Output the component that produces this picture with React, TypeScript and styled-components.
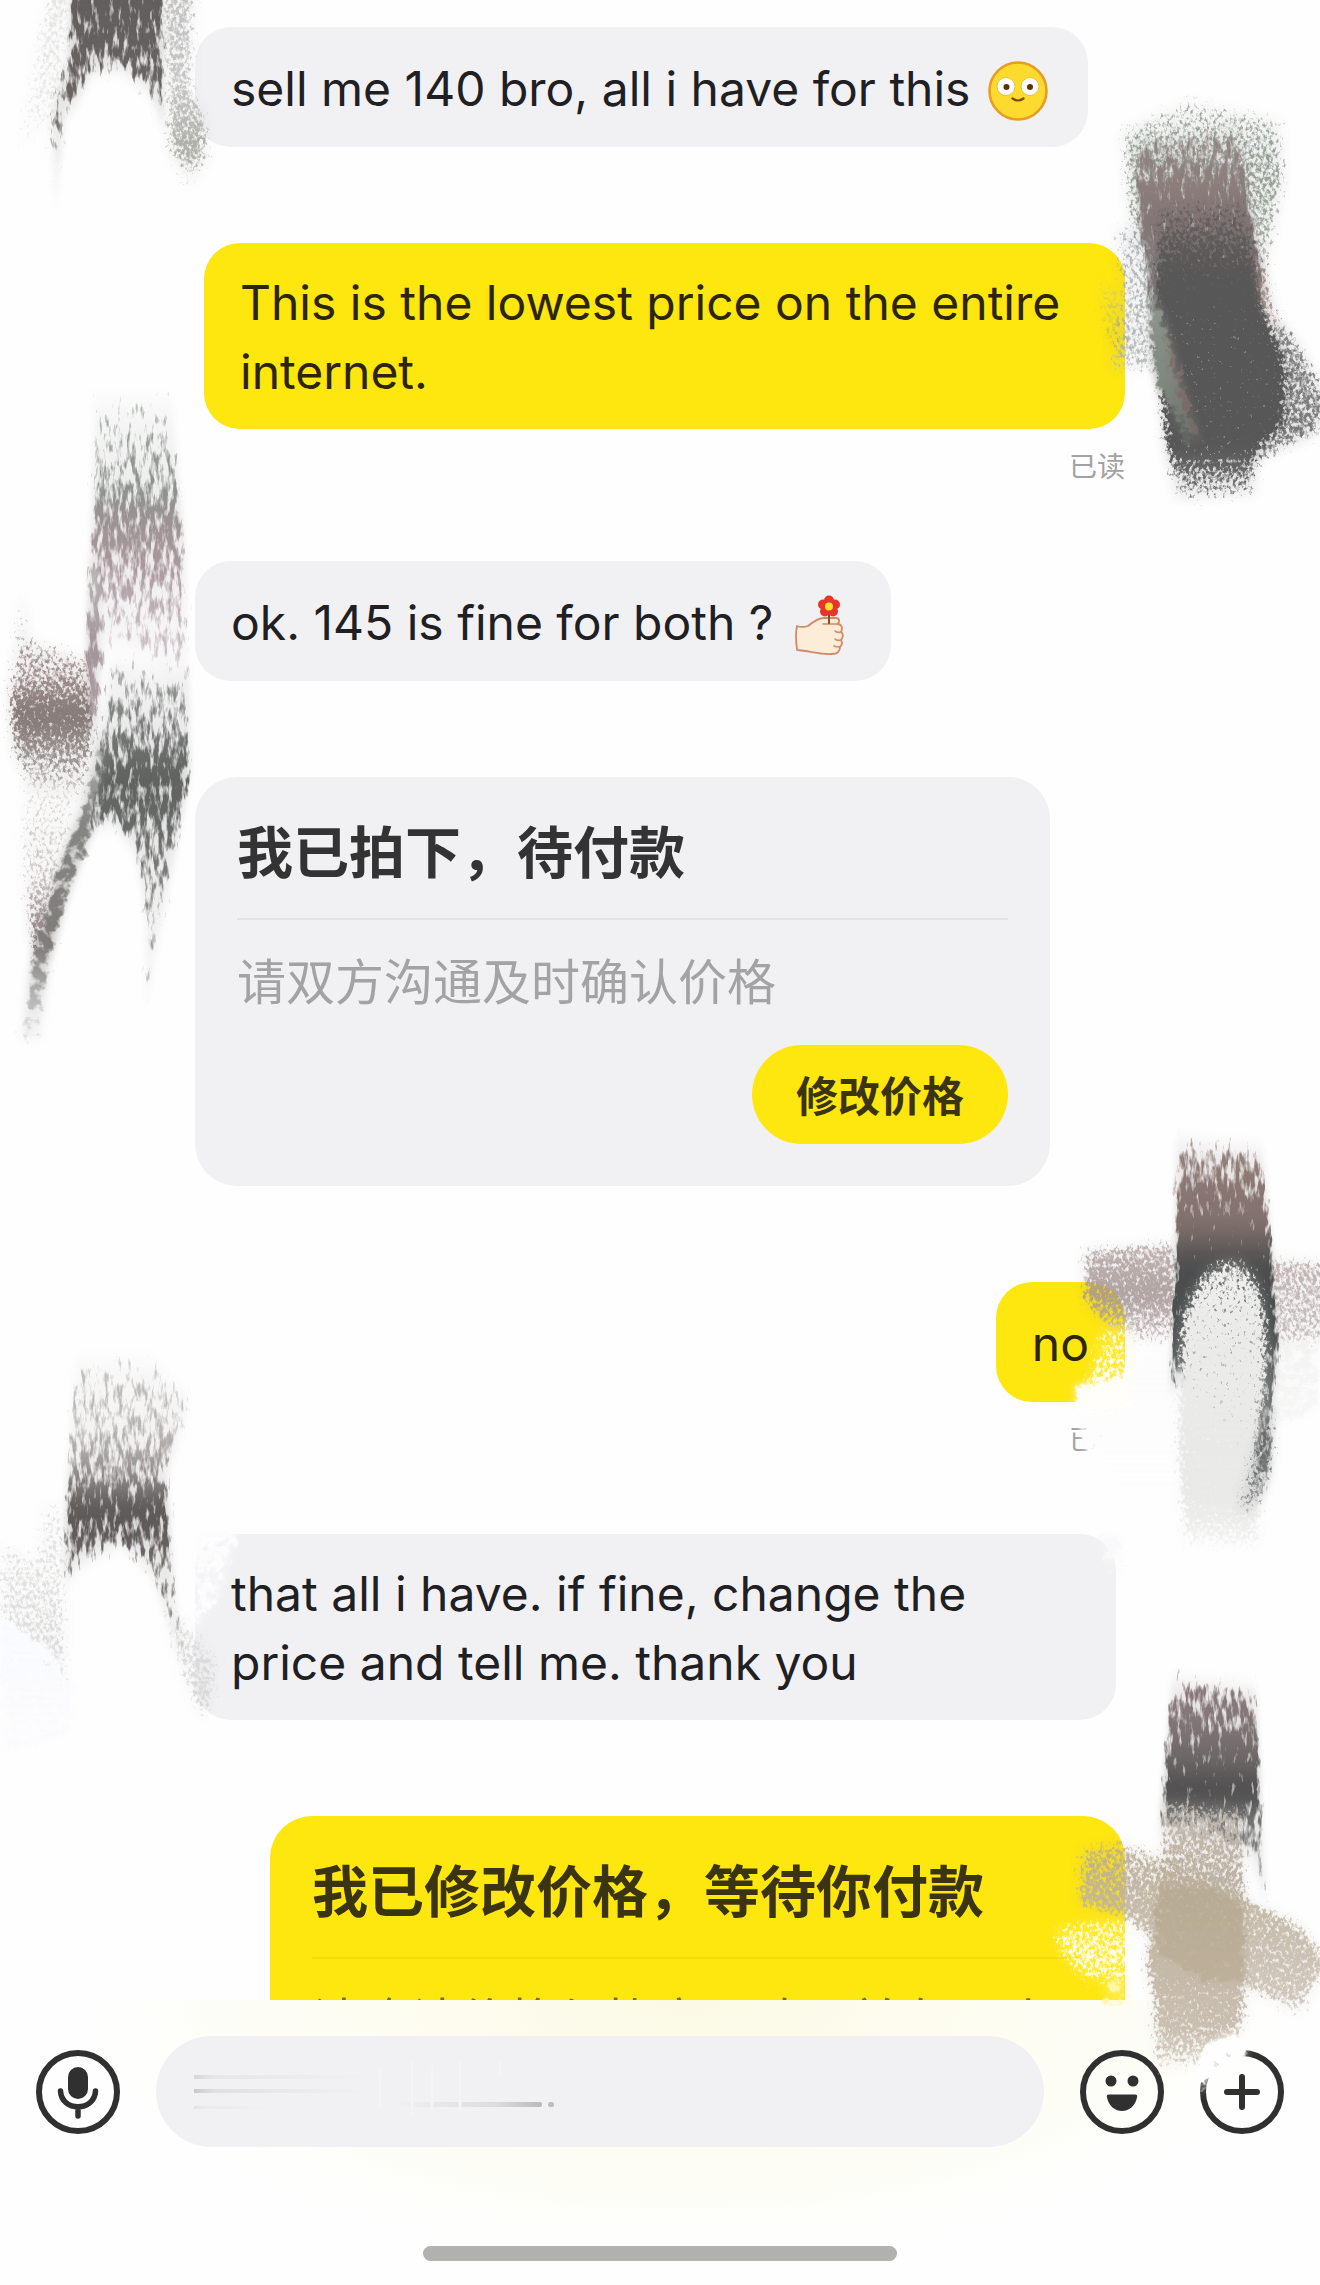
import React, { useId } from "react";
import styled, { createGlobalStyle, css } from "styled-components";

const GlobalStyle = createGlobalStyle`
  *, *::before, *::after { box-sizing: border-box; }
  body { margin: 0; background: #fefefe; }
  button, input { font: inherit; color: inherit; border: 0; padding: 0; background: none; }
`;

const latin = `Inter, "Noto Sans CJK SC", sans-serif`;
const han = `"Noto Sans CJK SC", "Noto Sans", sans-serif`;

type Side = "in" | "out";

const Page = styled.div`
  position: relative;
  display: flex;
  flex-direction: column;
  height: 100vh;
  overflow: hidden;
  background: #fefefe;
  font-family: ${latin};
`;

const Thread = styled.main`
  flex: 1;
  min-height: 0;
  overflow: hidden;
  display: flex;
  flex-direction: column;
  gap: 96px;
  padding: 27px 195px 0;
`;

const Row = styled.div<{ $side: Side }>`
  flex: none;
  display: flex;
  flex-direction: column;
  align-items: ${(p) => (p.$side === "in" ? "flex-start" : "flex-end")};
`;

const surface = css<{ $side: Side }>`
  background: ${(p) => (p.$side === "in" ? "#f1f1f4" : "#fee60f")};
`;

const Bubble = styled.p<{ $side: Side }>`
  ${surface}
  display: flex;
  align-items: center;
  max-width: 921px;
  min-height: 120px;
  margin: 0;
  padding: 25px 36px 23px;
  border-radius: 36px;
  font-size: 48px;
  line-height: 69px;
  white-space: pre-wrap;
  color: ${(p) => (p.$side === "in" ? "#1f2023" : "#2c2509")};
`;

const Receipt = styled.span`
  height: 36px;
  margin-top: 18px;
  margin-bottom: -18px;
  font: 28px/36px ${han};
  color: #a2a2a2;
`;

const Card = styled.section<{ $side: Side }>`
  ${surface}
  width: 855px;
  height: 409px;
  display: flex;
  flex-direction: column;
  padding: 30px 42px 42px;
  border-radius: 42px;
  font-family: ${han};
`;

const CardTitle = styled.h2<{ $side: Side }>`
  margin: 0;
  padding-bottom: 27px;
  border-bottom: 2px solid ${(p) => (p.$side === "in" ? "#e3e3e5" : "#f4dc0c")};
  font-size: 56px;
  line-height: 84px;
  font-weight: 700;
  color: ${(p) => (p.$side === "in" ? "#333333" : "#3b3413")};
`;

const CardText = styled.p<{ $side: Side }>`
  margin: 24px 0 0;
  font-size: 49px;
  line-height: 69px;
  color: ${(p) => (p.$side === "in" ? "#a3a3a3" : "#7a6e10")};
`;

const CardButton = styled.button`
  align-self: flex-end;
  margin-top: auto;
  height: 99px;
  padding: 0 44px 3px;
  border-radius: 50px;
  background: #fee60f;
  font-size: 42px;
  line-height: 63px;
  font-weight: 700;
  color: #3b3413;
`;

const Composer = styled.footer`
  flex: none;
  padding: 36px 36px 24px;
  background: radial-gradient(ellipse 46% 90% at 52% 0, #fcfae6 0%, #fdfdf2 55%, #fefefe 100%);
`;

const Tools = styled.div`
  display: flex;
  align-items: center;
  gap: 36px;
`;

const Field = styled.label`
  position: relative;
  flex: 1;
  display: flex;
  height: 111px;
  border-radius: 56px;
  background: #f1f1f4;
`;

const FieldInput = styled.input`
  width: 100%;
  padding: 0 38px;
  border-radius: 56px;
  outline: none;
  font-size: 46px;
`;

const Streaks = styled.svg`
  position: absolute;
  left: 38px;
  top: 24px;
  pointer-events: none;
`;

const IconButton = styled.button`
  flex: none;
  display: flex;
  width: 84px;
  height: 84px;
  border-radius: 50%;
  color: #303030;
`;

const HomeBar = styled.div`
  width: 38%;
  height: 15px;
  margin: 99px auto 0;
  border-radius: 8px;
  background: #b1b1b0;
`;

const Paint = styled.svg<{ $edge: "left" | "right" }>`
  position: absolute;
  top: 0;
  ${(p) => p.$edge}: 0;
  pointer-events: none;
`;

const EmojiBox = styled.svg`
  display: inline-block;
  vertical-align: -15px;
`;

const Flushed = () => (
  <EmojiBox width="68" height="60" viewBox="0 0 68 60" role="img" aria-label="flushed face">
    <circle cx="34" cy="30" r="28.500" fill="#fddb2e" stroke="#e79c26" strokeWidth="2.600" />
    <circle cx="22" cy="25.500" r="9" fill="#fff" stroke="#e9c33a" strokeWidth="1" />
    <circle cx="46" cy="25.500" r="9" fill="#fff" stroke="#e9c33a" strokeWidth="1" />
    <circle cx="22.500" cy="26" r="3" fill="#5c300c" />
    <circle cx="46" cy="26" r="3" fill="#5c300c" />
    <path d="M28.500 37.500q5.500 4 11 0" fill="none" stroke="#7d4a0c" strokeWidth="2.200" strokeLinecap="round" />
  </EmojiBox>
);

const FlowerHand = () => (
  <EmojiBox width="68" height="60" viewBox="0 0 68 60" role="img" aria-label="hand holding a flower">
    <path
      d="M10 31c3 1 8 1 11 0 6-5 11-8 16-8h12c4 0 4 5 1 6 5 0 6 4 4 8 3 2 2 6 0 8 2 3 1 5-1 7 0 5-3 7-8 7-11 1-22-3-35-4-1-8-2-16 0-24z"
      fill="#fdecd8"
      stroke="#cf8c66"
      strokeWidth="1.800"
      strokeLinejoin="round"
    />
    <path d="M52 29h-16M54 37q-4 1-6-1M54 45q-4 1-6-1M53 52q-4 0-6-1" fill="none" stroke="#cf8c66" strokeWidth="1.600" strokeLinecap="round" />
    <path d="M42 18v11" stroke="#8f4a2a" strokeWidth="2" />
    <g fill="#e8352c">
      <circle cx="42" cy="5.500" r="5" />
      <circle cx="48" cy="9.500" r="5" />
      <circle cx="46" cy="16.500" r="5" />
      <circle cx="38" cy="16.500" r="5" />
      <circle cx="36" cy="9.500" r="5" />
    </g>
    <circle cx="42" cy="11.500" r="4" fill="#fbe22f" />
  </EmojiBox>
);

const Ring = () => <circle cx="42" cy="42" r="39" fill="none" stroke="currentColor" strokeWidth="6" />;

const MicIcon = () => (
  <svg width="84" height="84" viewBox="0 0 84 84" aria-hidden="true">
    <Ring />
    <rect x="32" y="17" width="20" height="32" rx="10" fill="currentColor" />
    <path d="M24.500 41c1 21 34 21 35 0M42 57v9" fill="none" stroke="currentColor" strokeWidth="5.500" strokeLinecap="round" />
  </svg>
);

const SmileIcon = () => (
  <svg width="84" height="84" viewBox="0 0 84 84" aria-hidden="true">
    <Ring />
    <circle cx="31" cy="31" r="5.500" fill="currentColor" />
    <circle cx="53" cy="31" r="5.500" fill="currentColor" />
    <path d="M29 44.500h26q3 0 2 3c-4 18-26 18-30 0q-1-3 2-3z" fill="currentColor" />
  </svg>
);

const PlusIcon = () => (
  <svg width="84" height="84" viewBox="0 0 84 84" aria-hidden="true">
    <Ring />
    <path d="M42 27v30M27 42h30" stroke="currentColor" strokeWidth="6" strokeLinecap="round" />
  </svg>
);

const FieldStreaks = () => (
  <Streaks width="370" height="64" viewBox="0 0 370 64" aria-hidden="true">
    <defs>
      <linearGradient id="fadeOut">
        <stop offset="0" stopColor="#bcbcbe" />
        <stop offset="0.100" stopColor="#dadadd" />
        <stop offset="0.700" stopColor="#ededf0" />
        <stop offset="1" stopColor="#f1f1f4" />
      </linearGradient>
      <linearGradient id="fadeIn">
        <stop offset="0" stopColor="#f1f1f4" />
        <stop offset="0.700" stopColor="#dcdcde" />
        <stop offset="1" stopColor="#b9b9bb" />
      </linearGradient>
    </defs>
    <rect y="15" width="190" height="4" fill="url(#fadeOut)" opacity="0.500" />
    <rect y="29" width="180" height="4" fill="url(#fadeOut)" opacity="0.800" />
    <rect y="46" width="90" height="3" fill="url(#fadeOut)" opacity="0.300" />
    <rect x="200" y="42" width="148" height="5" rx="2" fill="url(#fadeIn)" />
    <rect x="354" y="42" width="6" height="5" rx="2" fill="#bdbdc0" />
    <path d="M186 6v44M218 2v56M238 6v48M266 2v50M306 2v16" stroke="#f4f4f6" strokeWidth="3" />
  </Streaks>
);

type Stop = [number, string, number];
type Brush = "bristle" | "grain" | "wisp";
interface Mark {
  d: string;
  brush: Brush;
  stops: Stop[];
  opacity?: number;
}

const LEFT: Mark[] = [
  // top corner
  { d: "M50 -20L72 -20L62 110L50 200L44 120L18 160L30 80Z", brush: "grain", stops: [[0, "#cfcdcb", 0.6], [1, "#dddcdb", 0.3]], opacity: 0.5 },
  { d: "M160 -20L194 -20L192 90L206 120L206 165L188 190L170 150Z", brush: "grain", stops: [[0, "#b3b2b1", 0.6], [0.5, "#bab9b8", 0.6], [0.8, "#9b9b94", 0.7], [1, "#b4b4ae", 0.2]], opacity: 0.8 },
  { d: "M74 -60L162 -60L164 130L150 90L120 66L92 70L80 96L64 120L56 210L52 110L68 60Z", brush: "bristle", stops: [[0, "#5f5b58", 0.9], [0.4, "#656160", 0.72], [0.6, "#6a6663", 0.5], [0.8, "#8c8886", 0.45], [1, "#8c8886", 0.3]] },
  // tall pair in the middle
  { d: "M94 400L172 400L184 540L190 700L150 660L110 640L96 740L84 680L92 520Z", brush: "bristle", stops: [[0, "#a3a9a4", 0.25], [0.25, "#8d918c", 0.5], [0.35, "#9c9292", 0.72], [0.5, "#aa9aa0", 0.55], [0.7, "#c9bfc4", 0.42], [1, "#d8d0d4", 0.25]] },
  { d: "M88 560L100 560L98 730L86 740Z", brush: "bristle", stops: [[0, "#b8bdb8", 0.5], [0.5, "#a4949a", 0.9], [1, "#b5aaad", 0.5]] },
  { d: "M22 590L30 640L90 660L92 750L84 800L30 790L14 755L10 690Z", brush: "grain", stops: [[0, "#b3a9a8", 0.3], [0.4, "#a0908f", 0.5], [0.6, "#857a77", 0.9], [0.8, "#9b9592", 0.55], [1, "#b5b0ae", 0.3]] },
  { d: "M24 780L84 780L66 850L52 910L40 970L30 930L22 850Z", brush: "grain", stops: [[0, "#e0dbda", 0.35], [0.5, "#cdc5c5", 0.45], [0.85, "#8b7f7d", 0.8], [1, "#8b7f7d", 0.6]] },
  { d: "M112 660L190 680L190 770L174 860L154 960L146 1010L146 920L136 850L112 820L86 830L96 760Z", brush: "bristle", stops: [[0, "#a4a6a4", 0.35], [0.2, "#787a78", 0.5], [0.34, "#5f615f", 0.8], [0.5, "#6b6d6b", 0.55], [0.7, "#8c8c8b", 0.42], [1, "#c8c8c7", 0.4]] },
  { d: "M112 730L92 830L66 900L48 965L40 1040L20 1040L34 950L58 870L84 800L98 740Z", brush: "wisp", stops: [[0, "#b4b5b3", 0.4], [0.3, "#858683", 0.75], [0.7, "#807c79", 0.85], [0.85, "#b3b3b2", 0.7], [1, "#d2d2d1", 0.4]] },
  // lower stroke with its wings
  { d: "M0 1540L34 1560L46 1500L66 1510L66 1700L40 1660L0 1622Z", brush: "grain", stops: [[0, "#dededd", 0.4], [1, "#d2d2d1", 0.6]], opacity: 0.8 },
  { d: "M160 1600L196 1630L218 1660L214 1690L204 1722L184 1680Z", brush: "grain", stops: [[0, "#dcdcdb", 0.4], [1, "#cfcfce", 0.7]], opacity: 0.8 },
  { d: "M0 1616L50 1650L76 1690L70 1735L0 1760Z", brush: "wisp", stops: [[0, "#fafbfe", 1], [1, "#fcfcfe", 0.5]] },
  { d: "M192 1528L240 1528L220 1600L192 1640Z", brush: "wisp", stops: [[0, "#fdfdfe", 0.7], [1, "#fdfdfe", 0.5]] },
  { d: "M76 1362L150 1362L190 1400L166 1480L176 1600L188 1680L164 1610L150 1570L120 1540L84 1560L64 1580L68 1460Z", brush: "bristle", stops: [[0, "#c5c3c1", 0.35], [0.25, "#b5b2b0", 0.52], [0.36, "#8f8b88", 0.58], [0.46, "#5c5755", 0.85], [0.56, "#625e5c", 0.6], [0.75, "#8c8987", 0.4], [1, "#cfcac9", 0.4]] },
];

const RIGHT: Mark[] = [
  // wide dark stroke, upper
  { d: "M1122 130L1190 100L1280 120L1284 180L1258 310L1240 260L1130 240Z", brush: "grain", stops: [[0, "#a5b0a3", 0.35], [0.3, "#939d93", 0.55], [1, "#b4b9b4", 0.5]] },
  { d: "M1132 145L1240 130L1266 310L1150 310Z", brush: "bristle", stops: [[0, "#938a86", 0.4], [0.4, "#897a79", 0.85], [1, "#777070", 1]] },
  { d: "M1116 225L1160 240L1160 370L1108 370L1120 300Z", brush: "grain", stops: [[0, "#9aa2a4", 0.45], [1, "#b0b4b2", 0.5]], opacity: 0.85 },
  { d: "M1098 280L1124 290L1124 350L1106 345Z", brush: "grain", stops: [[0, "#d9cf80", 0.5], [1, "#a9a45e", 0.5]], opacity: 0.6 },
  { d: "M1276 315L1300 345L1328 400L1316 435L1280 450L1230 475L1240 400Z", brush: "grain", stops: [[0, "#868686", 0.6], [1, "#777777", 0.6]] },
  { d: "M1156 205L1246 195L1262 300L1286 370L1284 425L1256 450L1254 495L1176 500L1166 440L1156 340Z", brush: "grain", stops: [[0, "#6a6463", 0.3], [0.18, "#5c5959", 0.7], [0.3, "#575757", 1], [0.82, "#575757", 1], [0.92, "#6a6a6a", 0.55], [1, "#7a7a7a", 0.35]] },
  { d: "M1150 285L1164 315L1180 380L1202 440L1186 446L1156 380L1150 330Z", brush: "wisp", stops: [[0, "#8f998f", 0.8], [0.6, "#808880", 1], [1, "#6a6e6a", 0.6]] },
  { d: "M1166 315L1182 380L1204 446L1194 440L1170 370Z", brush: "wisp", stops: [[0, "#86706d", 0.9], [1, "#746867", 0.7]] },
  { d: "M1256 245L1264 270L1284 340L1270 325L1256 290Z", brush: "grain", stops: [[0, "#7d4b42", 0.8], [0.3, "#9c8480", 0.7], [1, "#b2a5a3", 0.6]] },
  // cross beside the short reply
  { d: "M1084 1250L1176 1242L1176 1345L1128 1342L1108 1330L1084 1300Z", brush: "grain", stops: [[0, "#b6a8a6", 0.6], [0.5, "#a39492", 0.8], [1, "#c0b4b3", 0.35]], opacity: 0.85 },
  { d: "M1264 1258L1330 1262L1330 1340L1276 1350Z", brush: "grain", stops: [[0, "#b9adab", 0.6], [1, "#c4bbba", 0.5]], opacity: 0.9 },
  { d: "M1074 1384L1110 1384L1180 1330L1180 1500L1110 1500L1082 1440Z", brush: "wisp", stops: [[0, "#fdfcfc", 0.9], [1, "#fefefe", 1]] },
  { d: "M1100 1326L1134 1320L1134 1412L1070 1412L1088 1380Z", brush: "grain", stops: [[0, "#fffce0", 0.4], [0.5, "#fffdf0", 0.5], [1, "#fefefe", 1]] },
  { d: "M1280 1340L1320 1340L1320 1410L1270 1430Z", brush: "wisp", stops: [[0, "#f3f3f2", 0.6], [1, "#f8f8f8", 0.7]] },
  { d: "M1176 1140L1262 1150L1272 1260L1278 1340L1270 1480L1252 1512L1226 1505L1240 1440L1180 1380L1170 1390L1176 1260Z", brush: "bristle", stops: [[0, "#9a8a87", 0.35], [0.1, "#8c7975", 0.65], [0.22, "#83716e", 0.95], [0.34, "#4b4d4d", 1], [0.5, "#4c4f4f", 0.9], [0.75, "#7a7b7b", 0.6], [1, "#7c7d7d", 0.5]] },
  { d: "M1182 1324C1194 1276 1212 1256 1240 1260C1262 1276 1268 1310 1266 1360C1264 1420 1250 1450 1260 1480L1260 1550L1184 1546L1178 1440Z", brush: "grain", stops: [[0, "#f0f0ef", 0.6], [0.2, "#ebebea", 0.9], [0.8, "#e9e9e8", 1], [0.92, "#eeeeed", 0.7], [1, "#f6f6f6", 0.4]] },
  { d: "M1272 1400L1271 1470L1258 1506L1236 1516L1252 1460L1262 1420Z", brush: "grain", stops: [[0, "#6d6f6f", 0.65], [0.5, "#6a6c6c", 0.65], [1, "#9c9d9d", 0.45]] },
  { d: "M1098 1534L1120 1534L1120 1590L1104 1560Z", brush: "wisp", stops: [[0, "#fafafb", 0.9], [1, "#f7f7f9", 0.3]] },
  // lower cross over the yellow card
  { d: "M1056 1925L1130 1915L1130 1990L1084 1980L1056 1950Z", brush: "grain", stops: [[0, "#fffcd0", 0.45], [0.6, "#fffef2", 0.6], [1, "#fffde0", 0.4]] },
  { d: "M1106 1980L1128 1975L1128 2004L1102 2004Z", brush: "wisp", stops: [[0, "#fdf7a8", 0.6], [1, "#fdf7a8", 0.6]] },
  { d: "M1172 1680L1256 1690L1260 1800L1266 1900L1250 1850L1160 1830L1166 1760Z", brush: "bristle", stops: [[0, "#8a7776", 0.45], [0.15, "#86797a", 0.65], [0.35, "#6f6969", 0.9], [0.5, "#4c4c4c", 0.95], [0.65, "#777675", 0.6], [1, "#8f8f8e", 0.5]] },
  { d: "M1164 1800L1244 1810L1246 1960L1244 2020L1226 2060L1154 2070L1154 2000L1146 1960L1158 1900Z", brush: "grain", stops: [[0, "#c3bab0", 0.5], [0.3, "#bcb2a3", 0.7], [0.6, "#c5b9a8", 0.95], [0.85, "#c9bfb1", 0.75], [1, "#d6cfc5", 0.4]] },
  { d: "M1080 1850L1118 1840L1160 1856L1250 1900L1300 1925L1328 1960L1300 2015L1250 1990L1180 1960L1120 1915L1078 1905Z", brush: "grain", stops: [[0, "#b7ab96", 0.5], [0.35, "#bfb39f", 0.75], [0.8, "#c9bfb2", 0.75], [1, "#cfc6ba", 0.5]], opacity: 0.9 },
  { d: "M1156 1885L1210 1885L1244 1905L1246 1985L1200 1980L1156 1950Z", brush: "wisp", stops: [[0, "#b7aa93", 0.9], [1, "#bcae97", 0.9]], opacity: 0.8 },
  { d: "M1206 2044L1236 2030L1248 2050L1240 2066L1210 2076L1200 2094L1196 2070Z", brush: "wisp", stops: [[0, "#fefefe", 1], [1, "#fefefe", 1]] },
];

const BRUSHES: { name: Brush; freq: string; blur: string; haze: number }[] = [
  { name: "bristle", freq: "0.22 0.06", blur: "3 9", haze: 0.3 },
  { name: "grain", freq: "0.3 0.22", blur: "6 6", haze: 0.3 },
  { name: "wisp", freq: "0.1 0.1", blur: "4 4", haze: 0.5 },
];

const PaintLayer = ({ edge, from, width, marks }: { edge: "left" | "right"; from: number; width: number; marks: Mark[] }) => {
  const id = useId().replace(/[^a-zA-Z0-9]/g, "");
  return (
    <Paint $edge={edge} width={width} height="2285" viewBox={`${from} 0 ${width} 2285`} aria-hidden="true">
      <defs>
        {BRUSHES.map((b) => (
          <filter key={b.name} id={`${id}${b.name}`} x="-30%" y="-20%" width="160%" height="140%" colorInterpolationFilters="sRGB">
            <feGaussianBlur in="SourceGraphic" stdDeviation={b.blur} result="soft" />
            <feTurbulence type="fractalNoise" baseFrequency={b.freq} numOctaves={3} seed={7} result="noise" />
            <feColorMatrix in="noise" values="0 0 0 0 0  0 0 0 0 0  0 0 0 0 0  1.6 0 0 0 -0.3" result="tooth" />
            <feComposite in="soft" in2="tooth" operator="arithmetic" k1={0} k2={3} k3={2.5} k4={-2.4} result="mask" />
            <feComponentTransfer in="soft" result="flat">
              <feFuncA type="linear" slope={20} />
            </feComponentTransfer>
            <feComposite in="flat" in2="mask" operator="in" result="body" />
            <feComponentTransfer in="soft" result="haze">
              <feFuncA type="linear" slope={b.haze} />
            </feComponentTransfer>
            <feMerge>
              <feMergeNode in="haze" />
              <feMergeNode in="body" />
            </feMerge>
          </filter>
        ))}
        {marks.map((m, i) => (
          <linearGradient key={i} id={`${id}g${i}`} x1="0" y1="0" x2="0" y2="1">
            {m.stops.map(([o, c, a], k) => (
              <stop key={k} offset={o} stopColor={c} stopOpacity={a} />
            ))}
          </linearGradient>
        ))}
      </defs>
      {marks.map((m, i) => (
        <g key={i} opacity={m.opacity ?? 1}>
          <path d={m.d} fill={`url(#${id}g${i})`} filter={`url(#${id}${m.brush})`} />
        </g>
      ))}
    </Paint>
  );
};

export default function App() {
  return (
    <Page>
      <GlobalStyle />
      <Thread>
        <Row $side="in">
          <Bubble $side="in">
            <span>
              sell me 140 bro, all i have for this <Flushed />
            </span>
          </Bubble>
        </Row>
        <Row $side="out">
          <Bubble $side="out">This is the lowest price on the entire internet.</Bubble>
          <Receipt>已读</Receipt>
        </Row>
        <Row $side="in">
          <Bubble $side="in">
            <span>
              ok. 145 is fine for both ? <FlowerHand />
            </span>
          </Bubble>
        </Row>
        <Row $side="in">
          <Card $side="in">
            <CardTitle $side="in">我已拍下，待付款</CardTitle>
            <CardText $side="in">请双方沟通及时确认价格</CardText>
            <CardButton type="button">修改价格</CardButton>
          </Card>
        </Row>
        <Row $side="out">
          <Bubble $side="out">no</Bubble>
          <Receipt>已读</Receipt>
        </Row>
        <Row $side="in">
          <Bubble $side="in">that all i have. if fine, change the price and tell me. thank you</Bubble>
        </Row>
        <Row $side="out">
          <Card $side="out">
            <CardTitle $side="out">我已修改价格，等待你付款</CardTitle>
            <CardText $side="out">请确认价格与协商一致，并在24小时内付款</CardText>
          </Card>
        </Row>
      </Thread>
      <Composer>
        <Tools>
          <IconButton type="button" aria-label="Voice message">
            <MicIcon />
          </IconButton>
          <Field>
            <FieldInput type="text" aria-label="Message" />
            <FieldStreaks />
          </Field>
          <IconButton type="button" aria-label="Emoji">
            <SmileIcon />
          </IconButton>
          <IconButton type="button" aria-label="More">
            <PlusIcon />
          </IconButton>
        </Tools>
        <HomeBar />
      </Composer>
      <PaintLayer edge="left" from={0} width={260} marks={LEFT} />
      <PaintLayer edge="right" from={1040} width={280} marks={RIGHT} />
    </Page>
  );
}
